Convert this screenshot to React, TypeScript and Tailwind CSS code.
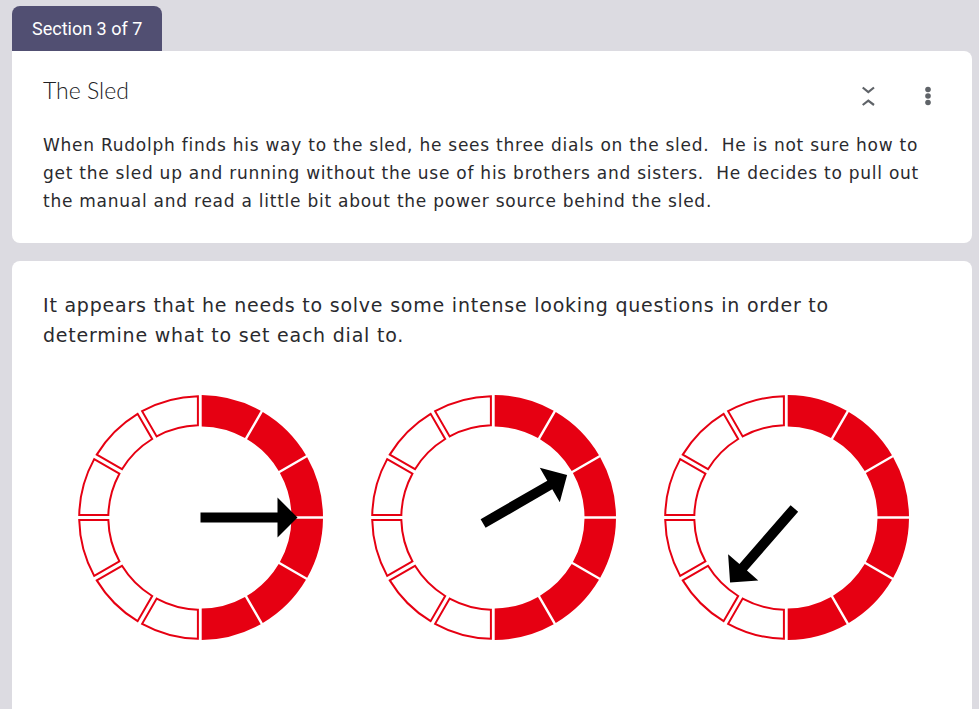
import React from "react";

const RED = "#e60012";

const pt = (c: number, r: number, a: number) => {
  const rad = (a * Math.PI) / 180;
  return [c + r * Math.sin(rad), c - r * Math.cos(rad)];
};

const segmentPath = (c: number, ro: number, ri: number, a0: number, a1: number, h: number) => {
  const dOut = (h / ro) * (180 / Math.PI);
  const dIn = (h / ri) * (180 / Math.PI);
  const [x1, y1] = pt(c, ro, a0 + dOut);
  const [x2, y2] = pt(c, ro, a1 - dOut);
  const [x3, y3] = pt(c, ri, a1 - dIn);
  const [x4, y4] = pt(c, ri, a0 + dIn);
  return `M${x1} ${y1} A${ro} ${ro} 0 0 1 ${x2} ${y2} L${x3} ${y3} A${ri} ${ri} 0 0 0 ${x4} ${y4} Z`;
};

const Dial = ({ angle, from, to }: { angle: number; from: number; to: number }) => {
  const c = 122.5;
  const head = to - 20;
  return (
    <svg width="245" height="245" viewBox="0 0 245 245" className="shrink-0">
      {Array.from({ length: 12 }).map((_, i) => {
        const a0 = i * 30;
        const a1 = a0 + 30;
        if (i < 6) {
          return <path key={i} d={segmentPath(c, 122.5, 91, a0, a1, 1.2)} fill={RED} />;
        }
        return (
          <path
            key={i}
            d={segmentPath(c, 121.3, 92.2, a0, a1, 2.6)}
            fill="white"
            stroke={RED}
            strokeWidth="2"
          />
        );
      })}
      <g transform={`translate(${c} ${c}) rotate(${angle})`}>
        <polygon
          points={`${from},-5 ${head},-5 ${head},-20 ${to},0 ${head},20 ${head},5 ${from},5`}
          fill="black"
        />
      </g>
    </svg>
  );
};

const body = { fontFamily: "'DejaVu Sans', sans-serif" };

export default function App() {
  return (
    <div className="min-h-screen bg-[#dcdbe1] pt-[6px]">
      <div className="ml-[12px] w-[960px]">
        <div
          className="flex h-[45px] w-[150px] items-center rounded-t-[8px] bg-[#514f72] pl-[20px] text-[18px] text-white"
          style={{ fontFamily: "Roboto, sans-serif" }}
        >
          Section 3 of 7
        </div>

        <div className="rounded-b-[8px] rounded-tr-[8px] bg-white px-[31px] pb-[28px] pt-[25px]">
          <div className="flex items-start justify-between">
            <h1
              className="text-[23px] font-light leading-[28px] text-[#202124]"
              style={{ fontFamily: "Lato, sans-serif" }}
            >
              The Sled
            </h1>
            <div className="mt-[7px] flex items-center gap-[35px]">
              <svg width="24" height="26" viewBox="0 0 24 26">
                <path d="M6.7 4.5 L12.3 9 L18 4.5" fill="none" stroke="#5f6368" strokeWidth="2.2" />
                <path d="M6.7 22 L12.3 17.7 L18 22" fill="none" stroke="#5f6368" strokeWidth="2.2" />
              </svg>
              <svg width="26" height="26" viewBox="0 0 26 26">
                <circle cx="13" cy="6.5" r="2.8" fill="#5f6368" />
                <circle cx="13" cy="13" r="2.8" fill="#5f6368" />
                <circle cx="13" cy="19.5" r="2.8" fill="#5f6368" />
              </svg>
            </div>
          </div>
          <p
            className="mt-[22px] whitespace-nowrap text-[17px] leading-[28px] tracking-[0.75px] text-[#2a2a2e]"
            style={body}
          >
            When Rudolph finds his way to the sled, he sees three dials on the sled.&nbsp; He is not sure how to
            <br />
            get the sled up and running without the use of his brothers and sisters.&nbsp; He decides to pull out
            <br />
            the manual and read a little bit about the power source behind the sled.
          </p>
        </div>

        <div className="mt-[18px] min-h-[460px] rounded-[8px] bg-white px-[31px] pt-[29px]">
          <p
            className="whitespace-nowrap text-[19px] leading-[30px] tracking-[0.78px] text-[#2a2a2e]"
            style={body}
          >
            It appears that he needs to solve some intense looking questions in order to
            <br />
            determine what to set each dial to.
          </p>
          <div className="mt-[45px] flex gap-[48px] pl-[35px]">
            <Dial angle={0} from={0} to={97} />
            <Dial angle={-30} from={-12} to={85} />
            <Dial angle={131} from={-12} to={86} />
          </div>
        </div>
      </div>
    </div>
  );
}
